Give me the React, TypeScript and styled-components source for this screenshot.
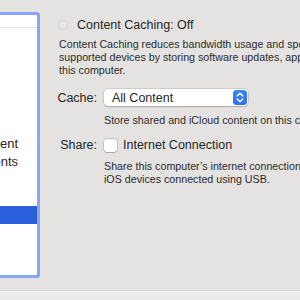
import React from "react";
import styled, { createGlobalStyle } from "styled-components";

const Global = createGlobalStyle`
  html, body { margin: 0; padding: 0; }
  body { width: 300px; height: 300px; overflow: hidden; background: #e4e3e2; }
`;

const Window = styled.div`
  width: 300px;
  height: 300px;
  overflow: hidden;
  display: flex;
  flex-direction: column;
  font-family: "Liberation Sans", Arial, sans-serif;
  color: #262626;
  background: #e4e3e2;
`;

const Main = styled.div`
  flex: 1;
  display: flex;
  min-height: 0;
`;

const BottomBar = styled.div`
  height: 9px;
  background: #ecebea;
  border-top: 1px solid #d9d8d7;
`;

const ListBox = styled.div`
  margin: 15px 0 0 -140px;
  width: 177px;
  height: 260px;
  flex: none;
  background: #ffffff;
  box-shadow: 0 0 0 3px #88a7f0;
  border-radius: 1px;
  display: flex;
  flex-direction: column;
  overflow: hidden;
`;

const ListHeader = styled.div`
  height: 12px;
  border-bottom: 1px solid #e2e2e2;
  flex: none;
`;

const Rows = styled.div`
  padding-top: 16px;
  display: flex;
  flex-direction: column;
`;

const Row = styled.div<{ $selected?: boolean }>`
  height: 18px;
  display: flex;
  align-items: center;
  padding-left: 8px;
  gap: 11px;
  font-size: 13px;
  white-space: nowrap;
  background: ${(p) => (p.$selected ? "#2b5fdc" : "transparent")};
  color: ${(p) => (p.$selected ? "#ffffff" : "#262626")};
`;

const RowCheck = styled.span`
  width: 14px;
  height: 14px;
  flex: none;
  border-radius: 3px;
  background: #fff;
  box-shadow: 0 0 0 0.5px rgba(0, 0, 0, 0.3);
`;

const Pane = styled.div`
  margin-left: 22px;
  padding-top: 18px;
  display: flex;
  flex-direction: column;
  min-width: 0;
  flex: 1;
`;

const StatusRow = styled.div`
  display: flex;
  align-items: center;
  gap: 9px;
  height: 14px;
  font-size: 12.5px;
  white-space: nowrap;
`;

const Radio = styled.span`
  width: 10px;
  height: 10px;
  margin-left: -1px;
  border-radius: 50%;
  background: #e8e7e6;
  border: 1px solid #d6d5d4;
  box-sizing: border-box;
`;

const Description = styled.div<{ $top?: number }>`
  margin-top: ${(p) => p.$top ?? 0}px;
  font-size: 10.7px;
  line-height: 13px;
  white-space: nowrap;
  color: #2c2c2c;
`;

const FormGrid = styled.div`
  display: grid;
  grid-template-columns: 38px 1fr;
  column-gap: 7px;
  align-items: center;
`;

const Label = styled.div`
  font-size: 12.5px;
  justify-self: end;
  white-space: nowrap;
`;

const Popup = styled.div`
  width: 144px;
  height: 17px;
  box-sizing: border-box;
  background: #ffffff;
  border-radius: 4px;
  box-shadow: 0 0 0 0.5px rgba(0, 0, 0, 0.18), 0 1px 1.5px rgba(0, 0, 0, 0.18);
  display: flex;
  align-items: center;
  justify-content: space-between;
  padding: 0 1px 0 8px;
  font-size: 12.5px;
`;

const Stepper = styled.span`
  width: 14px;
  height: 15px;
  border-radius: 3.5px;
  background: linear-gradient(#3b86f7, #2a70f0);
  display: flex;
  align-items: center;
  justify-content: center;
`;

const CheckRow = styled.div`
  display: flex;
  align-items: center;
  gap: 6px;
  font-size: 12.5px;
  white-space: nowrap;
`;

const Checkbox = styled.span`
  width: 13px;
  height: 13px;
  border-radius: 3px;
  background: #fff;
  box-shadow: 0 0 0 0.5px rgba(0, 0, 0, 0.25), 0 0.5px 1px rgba(0, 0, 0, 0.15);
`;

const Spacer = styled.div<{ $h: number }>`
  height: ${(p) => p.$h}px;
  flex: none;
`;

const services = [
  "Screen Sharing",
  "File Sharing",
  "Media Sharing",
  "Printer Sharing",
  "Remote Login",
  "Remote Management",
  "Remote Apple Events",
  "Internet Sharing",
  "Bluetooth Sharing",
  "Content Caching",
  "AirPlay Receiver",
];

export default function App() {
  return (
    <Window>
      <Global />
      <Main>
        <ListBox>
          <ListHeader />
          <Rows>
            {services.map((s) => (
              <Row key={s} $selected={s === "Content Caching"}>
                <RowCheck />
                {s}
              </Row>
            ))}
          </Rows>
        </ListBox>
        <Pane>
          <StatusRow>
            <Radio />
            <span>Content Caching: Off</span>
          </StatusRow>
          <Description $top={6}>
            Content Caching reduces bandwidth usage and speeds up installation on
            <br />
            supported devices by storing software updates, apps, and other content on
            <br />
            this computer.
          </Description>
          <Spacer $h={12} />
          <FormGrid>
            <Label>Cache:</Label>
            <Popup>
              <span>All Content</span>
              <Stepper>
                <svg width="8" height="11" viewBox="0 0 8 11" fill="none">
                  <path d="M1.2 4 L4 1.3 L6.8 4" stroke="#fff" strokeWidth="1.4" strokeLinecap="round" strokeLinejoin="round" />
                  <path d="M1.2 7 L4 9.7 L6.8 7" stroke="#fff" strokeWidth="1.4" strokeLinecap="round" strokeLinejoin="round" />
                </svg>
              </Stepper>
            </Popup>
            <span />
            <Description $top={8}>Store shared and iCloud content on this computer.</Description>
          </FormGrid>
          <Spacer $h={11} />
          <FormGrid>
            <Label>Share:</Label>
            <CheckRow>
              <Checkbox />
              <span>Internet Connection</span>
            </CheckRow>
            <span />
            <Description $top={8}>
              Share this computer’s internet connection and cache iCloud content with
              <br />
              iOS devices connected using USB.
            </Description>
          </FormGrid>
        </Pane>
      </Main>
      <BottomBar />
    </Window>
  );
}
